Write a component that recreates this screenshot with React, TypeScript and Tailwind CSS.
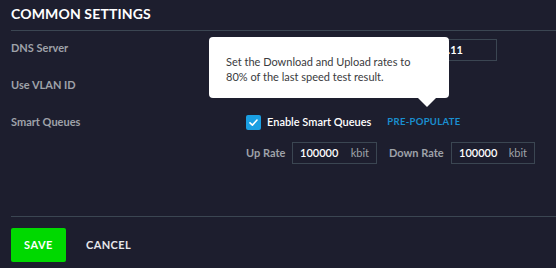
import React from "react";

export default function App() {
  return (
    <div className="w-[556px] h-[268px] bg-[#1d1e2e] overflow-hidden relative font-['Lato',sans-serif]">
      <div className="pl-[11px]">
        <div className="h-[31px] flex items-center pb-[3px] border-b border-[#3b4652] text-[14px] font-bold text-white tracking-[0.15px]">
          COMMON SETTINGS
        </div>

        <div className="mt-[8px] h-[22px] flex items-center">
          <div className="w-[235px] pb-[3px] text-[11px] font-bold text-[#9fa2a9]">DNS Server</div>
          <div className="w-[251px] h-[22px] border border-[#3b4652] flex items-center pl-[7px]">
            <div className="w-[209px] flex justify-end overflow-hidden">
              <span className="whitespace-nowrap text-[11px] font-bold text-white">192.168.100.1, 8.8.4.4, 192.168.10.11</span>
            </div>
          </div>
        </div>

        <div className="mt-[13px] h-[22px] flex items-center">
          <div className="w-[235px] text-[11px] font-bold text-[#9fa2a9]">Use VLAN ID</div>
        </div>

        <div className="mt-[15px] h-[22px] flex items-center">
          <div className="w-[235px] text-[11px] font-bold text-[#9fa2a9]">Smart Queues</div>
          <div className="w-[15px] h-[15px] rounded-[2px] bg-[#1a9fe2] flex items-center justify-center">
            <svg width="11" height="11" viewBox="0 0 11 11">
              <path d="M2 5.8 L4.4 8.1 L9 3" fill="none" stroke="white" strokeWidth="1.6" strokeLinecap="round" strokeLinejoin="round" />
            </svg>
          </div>
          <div className="ml-[6px] text-[11px] font-semibold text-white">Enable Smart Queues</div>
          <div className="ml-[16px] text-[9.5px] font-bold text-[#1a8fd0] tracking-[0.3px]">PRE-POPULATE</div>
        </div>

        <div className="mt-[9px] h-[22px] flex items-center">
          <div className="w-[235px]" />
          <div className="w-[46px] text-[11px] font-bold text-[#9fa2a9]">Up Rate</div>
          <div className="w-[85px] h-[22px] border border-[#3b4652] flex items-center justify-between px-[7px]">
            <span className="text-[11px] font-semibold text-white">100000</span>
            <span className="text-[11px] text-[#9fa2a9]">kbit</span>
          </div>
          <div className="ml-[12px] w-[62px] text-[11px] font-bold text-[#9fa2a9]">Down Rate</div>
          <div className="w-[84px] h-[22px] border border-[#3b4652] flex items-center justify-between px-[7px]">
            <span className="text-[11px] font-semibold text-white">100000</span>
            <span className="text-[11px] text-[#9fa2a9]">kbit</span>
          </div>
        </div>

        <div className="mt-[52px] border-t border-[#3b4652]" />

        <div className="mt-[11px] flex items-center">
          <button className="w-[55px] h-[34px] rounded-[2px] bg-[#00d900] text-white text-[11px] font-bold tracking-[0.5px]">
            SAVE
          </button>
          <button className="ml-[20px] text-[#e6e7ea] text-[11px] font-bold tracking-[0.4px]">CANCEL</button>
        </div>
      </div>

      <div className="absolute left-[209px] top-[37px] w-[240px] h-[61px] bg-white rounded-[4px] pl-[17px] pt-[18px] text-[11px] leading-[14.5px] text-[#3a3b40]">
        Set the Download and Upload rates to
        <br />
        80% of the last speed test result.
      </div>
      <svg className="absolute left-[417px] top-[97px]" width="20" height="11" viewBox="0 0 20 11">
        <polygon points="0,0 20,0 10,10" fill="white" />
      </svg>
    </div>
  );
}
